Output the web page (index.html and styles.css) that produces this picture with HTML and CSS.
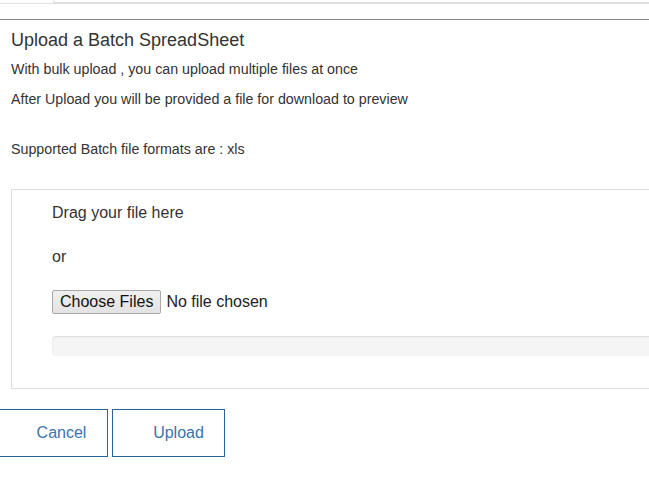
FILE: index.html
```html
<!DOCTYPE html>
<html>
<head>
<meta charset="utf-8">
<link rel="stylesheet" href="styles.css">
</head>
<body>
<div class="topbar">
  <div class="tab-left"></div>
  <div class="tab-right"></div>
</div>
<main class="content">
  <h1 class="title">Upload a Batch SpreadSheet</h1>
  <p class="line first">With bulk upload , you can upload multiple files at once</p>
  <p class="line second">After Upload you will be provided a file for download to preview</p>
  <p class="line third">Supported Batch file formats are : xls</p>
  <section class="dropzone">
    <div class="drag">Drag your file here</div>
    <div class="or">or</div>
    <div class="picker"><input class="file" type="file" multiple></div>
    <div class="progress"></div>
  </section>
</main>
<div class="actions">
  <button class="btn cancel">Cancel</button>
  <button class="btn upload">Upload</button>
</div>
</body>
</html>
```
FILE: styles.css
```css
html, body {
  margin: 0;
  padding: 0;
  background: #fff;
  overflow: hidden;
}
body {
  font-family: "Liberation Sans", Arial, sans-serif;
  color: #333;
  width: 649px;
}
.topbar {
  display: flex;
  height: 19px;
  border-bottom: 1px solid #858585;
}
.tab-left {
  width: 53px;
  height: 3px;
  border-right: 1px solid #e2e2e2;
  border-bottom: 1px solid #e2e2e2;
}
.tab-right {
  flex: 1;
  height: 2px;
  margin-top: 2px;
  background: #dedede;
}
.content {
  padding-left: 11px;
}
.title {
  margin: 10px 0 0;
  font-size: 18px;
  font-weight: normal;
  line-height: 20px;
  color: #333;
}
.line {
  margin: 0;
  font-size: 14.25px;
  line-height: 18px;
}
.first { margin-top: 10px; }
.second { margin-top: 12px; }
.third { margin-top: 32px; }
.dropzone {
  margin-top: 31px;
  width: 660px;
  border: 1px solid #dddddd;
  padding: 13px 0 32px 40px;
  box-sizing: border-box;
}
.drag, .or {
  font-size: 16px;
  line-height: 20px;
}
.or { margin-top: 24px; }
.picker {
  margin-top: 23px;
  height: 24px;
  display: flex;
  align-items: center;
}
.file {
  font-family: "Liberation Sans", Arial, sans-serif;
  font-size: 16px;
  color: #222;
}
.file::file-selector-button {
  font-family: "Liberation Sans", Arial, sans-serif;
  font-size: 16px;
  color: #111;
  background: linear-gradient(#f0f0f0, #e3e3e3);
  border: 1px solid #a9a9a9;
  border-radius: 2px;
  padding: 1px 7px;
  height: 24px;
  margin-right: 5px;
}
.progress {
  margin-top: 22px;
  height: 20px;
  background: #f5f5f5;
  border-radius: 4px;
  box-shadow: inset 0 1px 2px rgba(0,0,0,.1);
}
.actions {
  display: flex;
  gap: 4px;
  margin-top: 20px;
  margin-left: -5px;
}
.btn {
  width: 113px;
  height: 48px;
  box-sizing: border-box;
  padding: 0 0 0 20px;
  background: #fff;
  border: 1px solid #2a6496;
  border-radius: 0;
  font-family: "Liberation Sans", Arial, sans-serif;
  font-size: 16px;
  color: #3a74ad;
}
```
